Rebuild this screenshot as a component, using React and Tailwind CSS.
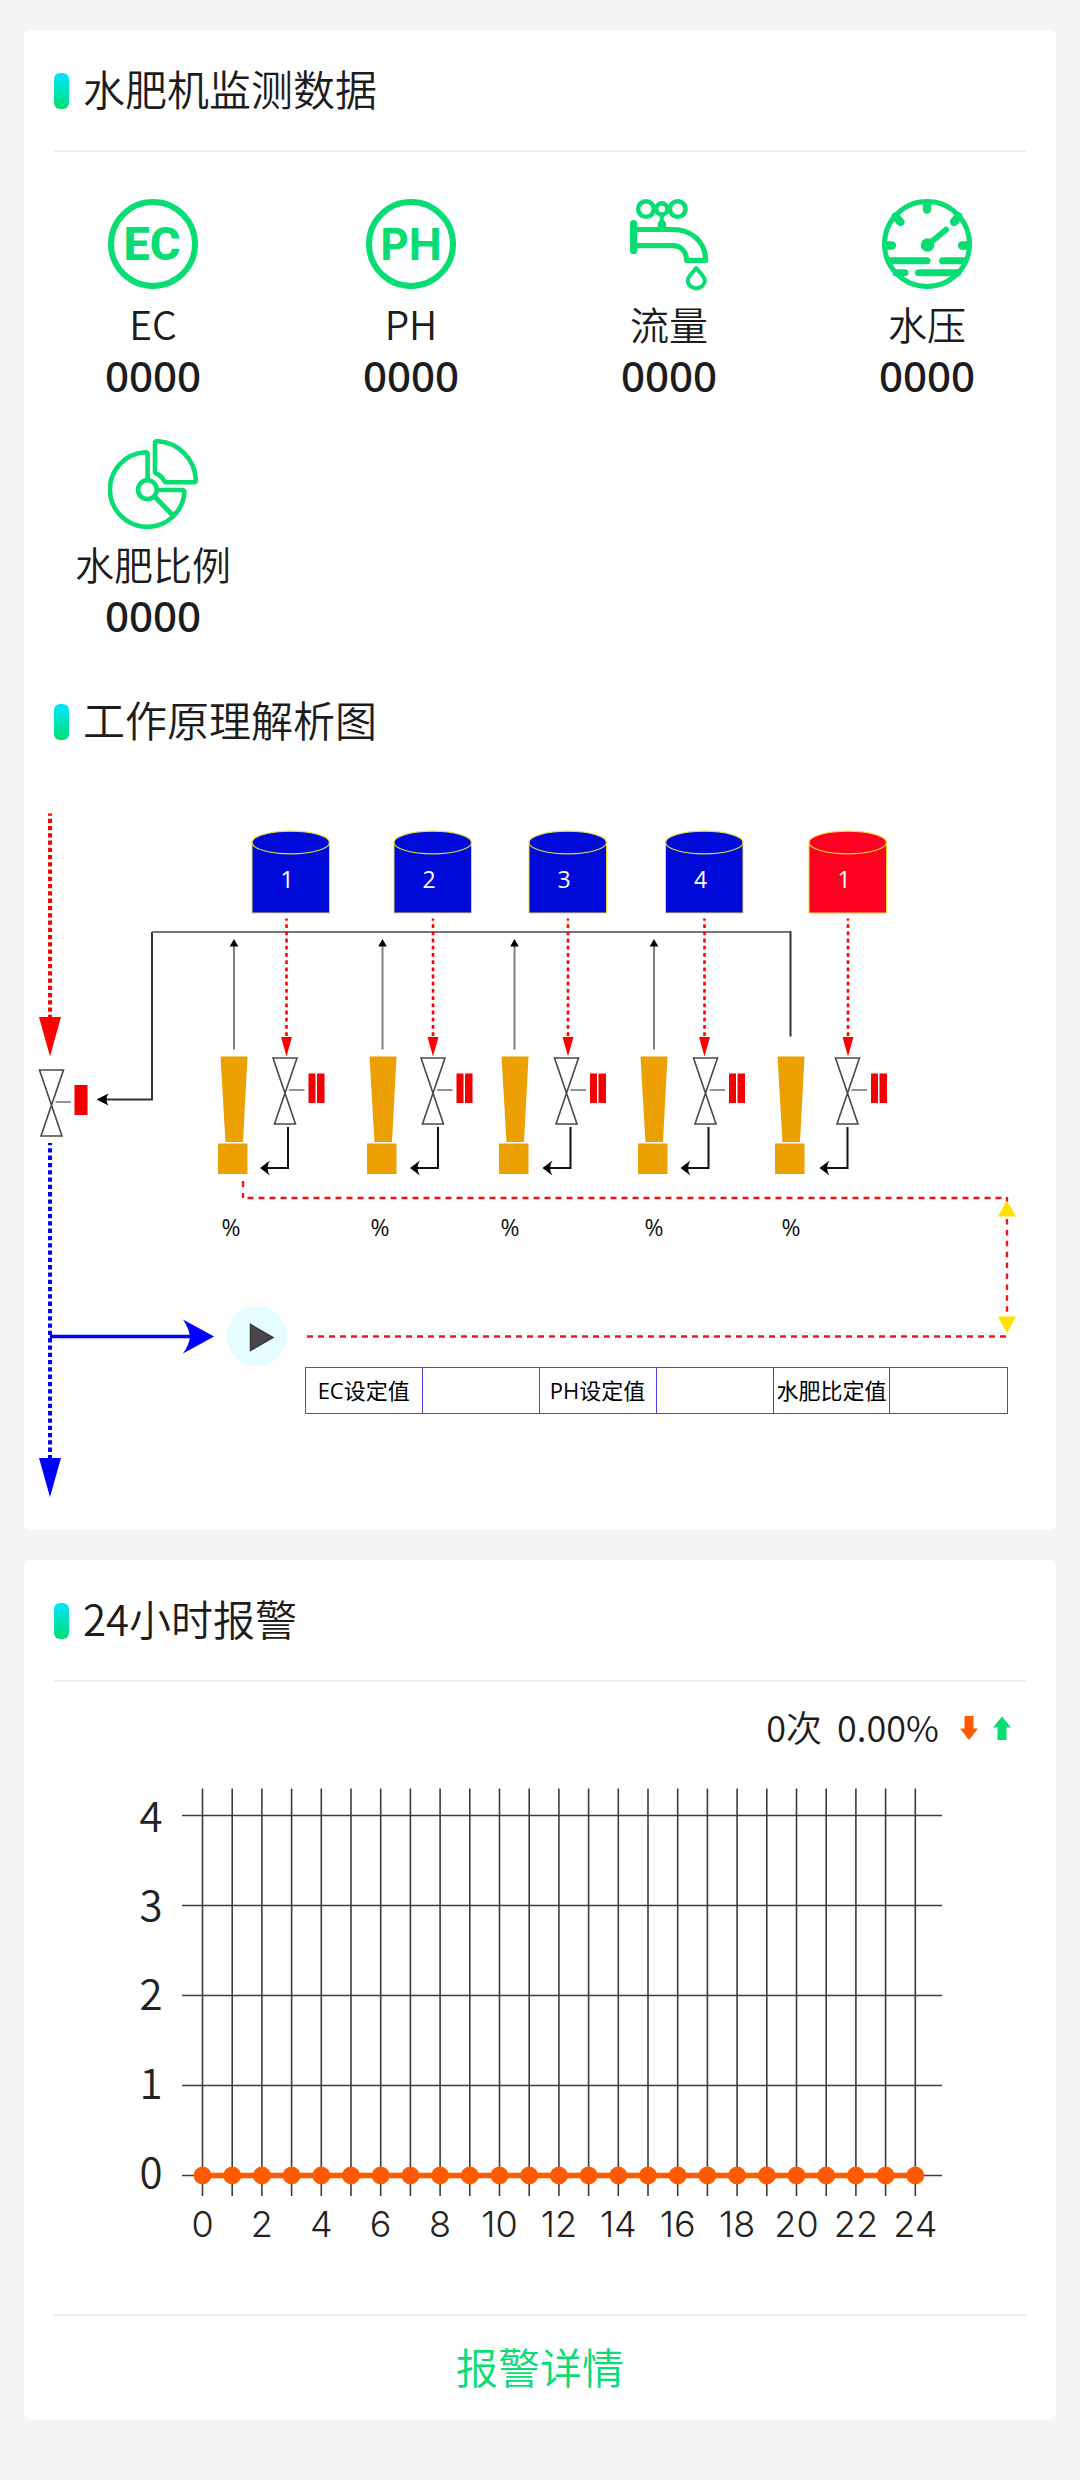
const GREEN = "#07dd73";
const ORANGE = "#ff5a00";
const AMBER = "#eb9f00";

function EcIcon() {
  return (
    <svg viewBox="0 0 90 90" className="size-[90px]" aria-hidden="true">
      <circle cx="45" cy="45" r="42" fill="none" stroke={GREEN} strokeWidth="6" />
      <text x="44" y="61" textAnchor="middle" fill={GREEN} className="font-[Roboto,sans-serif] text-[47px] font-extrabold">EC</text>
    </svg>
  );
}

function PhIcon() {
  return (
    <svg viewBox="0 0 90 90" className="size-[90px]" aria-hidden="true">
      <circle cx="45" cy="45" r="42" fill="none" stroke={GREEN} strokeWidth="6" />
      <text x="45" y="61" textAnchor="middle" fill={GREEN} className="font-[Inter,sans-serif] text-[44px] font-bold">PH</text>
    </svg>
  );
}

function TapIcon() {
  return (
    <svg viewBox="0 0 90 90" className="size-[90px] overflow-visible" fill="none" stroke={GREEN} aria-hidden="true">
      <circle cx="22" cy="10" r="7.8" strokeWidth="4.6" />
      <circle cx="53.7" cy="10" r="7.8" strokeWidth="4.6" />
      <circle cx="37.8" cy="10" r="5.6" strokeWidth="4.6" />
      <path d="M35.8 16h4v5l2.4 3v5h-8.4v-5l2-3z" fill={GREEN} stroke="none" />
      <rect x="6" y="21" width="7.2" height="34" rx="3.6" fill={GREEN} stroke="none" />
      <path d="M12 30.5H48.5C68 30.5 81.6 43.5 81.6 61.3H62.6C62.6 52.5 57 46.7 48.5 46.7H12" strokeWidth="5.2" strokeLinejoin="round" />
      <path d="M72.3 69C69.5 73 63.8 77.5 63.8 81.500a8.500 7.800 0 0 0 17 0C80.800 77.500 75 73 72.300 69z" strokeWidth="4" strokeLinejoin="round" />
    </svg>
  );
}

function GaugeIcon() {
  return (
    <svg viewBox="0 0 90 90" className="size-[90px]" fill="none" stroke={GREEN} strokeLinecap="round" aria-hidden="true">
      <circle cx="45" cy="45" r="42.500" strokeWidth="5" />
      <path d="M45 5V10.500M5 46.500H10M80 46.500H85M13.500 17.500L18.500 23M76.500 17.500L72 23" strokeWidth="8.400" />
      <path d="M45.500 46L64 30.800" strokeWidth="6" />
      <circle cx="45.500" cy="46" r="6.800" fill={GREEN} stroke="none" />
      <path d="M7 61.700H45M60.500 61.700H83M14 73.700H23M36.500 73.700H76" strokeWidth="7" />
    </svg>
  );
}

function RatioIcon() {
  return (
    <svg viewBox="0 0 90 90" className="size-[90px]" fill="none" stroke={GREEN} strokeWidth="4.600" strokeLinejoin="round" aria-hidden="true">
      <path d="M39.600 41V15.500Q39.600 13.200 37 13.300A37.300 37.300 0 1 0 76.400 53.500Q76.400 51 74 51H49" />
      <circle cx="39.400" cy="50.700" r="9.400" />
      <path d="M47.500 58.500L64.500 76" strokeWidth="5" />
      <path d="M64.500 76Q66 73.500 69 72.500" strokeWidth="3" />
      <path d="M49.500 2.200A40.500 40.500 0 0 1 87.800 41Q88 43.300 86 43.300H57.500Q55.500 41.500 54.500 39Q52 36.500 47 33.500V4Q47 2.200 49.500 2.200Z" />
    </svg>
  );
}

const METRICS = [
  { label: "EC", value: "0000", Icon: EcIcon },
  { label: "PH", value: "0000", Icon: PhIcon },
  { label: "流量", value: "0000", Icon: TapIcon },
  { label: "水压", value: "0000", Icon: GaugeIcon },
  { label: "水肥比例", value: "0000", Icon: RatioIcon },
];

function SectionTitle({ children }) {
  return (
    <header className="flex h-[120px] items-center gap-[14px] px-[30px]">
      <span className="mt-0.5 h-9 w-[15px] rounded-md bg-linear-to-b from-[#00e5ff] to-[#00de6e]" />
      <h2 className="pb-1 text-[42px] leading-[60px] font-[350]">{children}</h2>
    </header>
  );
}

function Divider() {
  return <hr className="mx-[30px] h-0.5 border-0 bg-[#ececec]" />;
}

// One lane per tank: tank left edge, drop line, valve centre, return pipe, pump left edge, riser, ratio label.
const LANES = [
  { name: "1", color: "#000bd9", tank: 252, drop: 286.5, valve: 285, back: 288, pump: 218, riser: 234, ratio: 231 },
  { name: "2", color: "#000bd9", tank: 394, drop: 433, valve: 433, back: 438, pump: 367, riser: 382.5, ratio: 380 },
  { name: "3", color: "#000bd9", tank: 529, drop: 568, valve: 566.5, back: 570.5, pump: 499, riser: 514.5, ratio: 510 },
  { name: "4", color: "#000bd9", tank: 665.5, drop: 704.5, valve: 705.5, back: 708.5, pump: 638, riser: 654, ratio: 654 },
  { name: "1", color: "#ff0020", tank: 809, drop: 848, valve: 847.5, back: 847.5, pump: 775, riser: null, ratio: 791 },
];

function Valve({ x, y }) {
  return (
    <g fill="none" stroke="#4a4a4a" strokeWidth="1.6">
      <path d={`M${x - 12} ${y - 32}h24L${x - 10.5} ${y + 34}h21z`} />
      <path d={`M${x + 4} ${y}h15.500`} stroke="#777" />
    </g>
  );
}

function Lane({ lane }) {
  const { name, color, tank, drop, valve, back, pump, riser, ratio } = lane;
  return (
    <g>
      <rect x={tank} y="844" width="77.500" height="69" fill={color} stroke="#e6df3a" strokeWidth="1" />
      <ellipse cx={tank + 38.75} cy="842.500" rx="38.750" ry="11.300" fill={color} stroke="#e6df3a" strokeWidth="1.200" />
      <text x={tank + 35} y="888" textAnchor="middle" fill="#fff" className="text-[23px]">{name}</text>
      <path d={`M${drop} 918.500V1037`} stroke="#f00" strokeWidth="2.600" strokeDasharray="3.800 3.400" strokeDashoffset="1.500" />
      <path d={`M${drop - 5.5} 1037h11l-5.500 19.500z`} fill="#f00" />
      {riser && <path d={`M${riser} 1049.500V945`} stroke="#808080" strokeWidth="2" />}
      {riser && <path d={`M${riser - 4.3} 946.500h8.600L${riser} 939z`} fill="#000" />}
      <path d={`M${pump + 2.5} 1056.500h27l-4.500 85.500h-17.500z`} fill={AMBER} />
      <rect x={pump} y="1143.500" width="29.500" height="30.500" fill={AMBER} />
      <Valve x={valve} y={1090} />
      <rect x={valve + 23.5} y="1073.500" width="7" height="29.500" fill="#f20000" />
      <rect x={valve + 32} y="1073.500" width="7.500" height="29.500" fill="#f20000" />
      <path d={`M${back} 1127V1168H${back - 22}`} fill="none" stroke="#111" strokeWidth="2" />
      <path d={`M${back - 28} 1168l10-7.500q-5 7.500 0 15z`} fill="#000" />
      <text x={ratio} y="1236" textAnchor="middle" fill="#111" className="text-[23px]">%</text>
    </g>
  );
}

function Schematic() {
  return (
    <svg viewBox="24 781 1032 749" className="block w-full font-['Open_Sans','Noto_Sans_CJK_SC',sans-serif]" role="img" aria-label="工作原理解析图">
      <path d="M50 813.500V1017" stroke="#f00" strokeWidth="4" strokeDasharray="4.260 3" strokeDashoffset="2" />
      <path d="M39 1017h22l-11 39.500z" fill="#f00" />
      <Valve x={51.5} y={1102} />
      <rect x="74.500" y="1085" width="13" height="30" fill="#f20000" />
      <path d="M50 1143V1458" stroke="#00f" strokeWidth="4" strokeDasharray="4.300 3" strokeDashoffset="2" />
      <path d="M39 1458h22l-11 39z" fill="#00f" />

      <path d="M152 932V1099.500H104" fill="none" stroke="#333" strokeWidth="2" />
      <path d="M152 932H790.500" stroke="#777" strokeWidth="2" />
      <path d="M790.500 931V1036.500" stroke="#333" strokeWidth="2" />
      <path d="M96.500 1099.500l12-6q-4 6 0 12z" fill="#000" />

      {LANES.map((lane) => (
        <Lane key={lane.tank} lane={lane} />
      ))}

      <g fill="none" stroke="#ee1616" strokeWidth="2.400">
        <path d="M243 1181V1198" strokeDasharray="6 6" />
        <path d="M247.500 1198H1007" strokeDasharray="6 5" />
        <path d="M1007 1197V1202" />
        <path d="M1007 1219V1316" strokeDasharray="5.500 5.400" />
        <path d="M307 1336.500H1007" strokeDasharray="6 5" />
      </g>
      <path d="M998 1216.500h18l-9-16zM998 1316.500h18l-9 17z" fill="#ffe000" />

      <path d="M50 1336.500H192" stroke="#00f" strokeWidth="3.600" />
      <path d="M214 1336.500l-31-17q6 9 7 17q-1 9-7 17z" fill="#00f" />
    </svg>
  );
}

function SetpointTable() {
  return (
    <table className="h-[47px] w-full table-fixed border-collapse text-center font-['Open_Sans','Noto_Sans_CJK_SC',sans-serif] text-[22px] leading-[30px] text-black">
      <tbody>
        <tr>
          {["EC设定值", "", "PH设定值", "", "水肥比定值", ""].map((text, i) => (
            <td key={i} className="border border-[#4f44e4] p-0 whitespace-nowrap">{text}</td>
          ))}
        </tr>
      </tbody>
    </table>
  );
}

const HOURS = Array.from({ length: 25 }, (_, i) => i);
const ALARMS = HOURS.map(() => 0);
const hourX = (h) => 202.5 + h * 29.7;
const countY = (n) => 2175.5 - n * 90;

function AlarmChart() {
  return (
    <svg viewBox="24 1755 1032 559" className="block w-full" role="img" aria-label="24小时报警">
      <g stroke="#3c3c3c" strokeWidth="1.600">
        {HOURS.map((h) => (
          <path key={h} d={`M${hourX(h)} 1788.500V2196`} />
        ))}
        {[0, 1, 2, 3, 4].map((n) => (
          <path key={n} d={`M182 ${countY(n)}H942`} />
        ))}
      </g>
      <g fill="#222" textAnchor="middle">
        {[0, 1, 2, 3, 4].map((n) => (
          <text key={n} x="151" y={2188 - n * 89} className="text-[42px] font-[350]">{n}</text>
        ))}
        {HOURS.filter((h) => h % 2 === 0).map((h) => (
          <text key={h} x={hourX(h)} y="2237" className="font-[Inter,sans-serif] text-[36px] font-[350]">{h}</text>
        ))}
      </g>
      <polyline points={ALARMS.map((v, h) => `${hourX(h)},${countY(v)}`).join(" ")} fill="none" stroke={ORANGE} strokeWidth="5.500" />
      {ALARMS.map((v, h) => (
        <circle key={h} cx={hourX(h)} cy={countY(v)} r="9" fill={ORANGE} />
      ))}
    </svg>
  );
}

export default function App() {
  return (
    <main className="flex min-h-screen flex-col gap-[30px] bg-[#f4f4f4] px-6 py-[30px] font-['Noto_Sans_CJK_SC',sans-serif] text-[#1c1c1c]">
      <section className="rounded-md bg-white">
        <SectionTitle>水肥机监测数据</SectionTitle>
        <Divider />
        <ul className="grid grid-cols-4 gap-y-9 pt-[47px]">
          {METRICS.map(({ label, value, Icon }) => (
            <li key={label} className="flex flex-col items-center">
              <Icon />
              <span className="mt-2 text-[39px] leading-[52px] font-[350]">{label}</span>
              <span className="font-['Noto_Sans',sans-serif] text-[42px] leading-[54px] font-medium">{value}</span>
            </li>
          ))}
        </ul>
        <div className="mt-[18px]">
          <SectionTitle>工作原理解析图</SectionTitle>
        </div>
        <div className="relative">
          <Schematic />
          <button type="button" aria-label="播放" className="absolute top-[70.1%] left-[19.7%] flex size-[60px] items-center justify-center rounded-full bg-[#e6fdff]">
            <svg viewBox="0 0 60 60" className="size-full" aria-hidden="true">
              <path d="M23.500 18.500L46 31.500L23.500 44.500z" fill="#484848" stroke="#3a3a3a" strokeWidth="1.500" />
            </svg>
          </button>
          <div className="absolute top-[78.2%] right-[4.7%] left-[27.2%]">
            <SetpointTable />
          </div>
        </div>
      </section>

      <section className="rounded-md bg-white">
        <SectionTitle>24小时报警</SectionTitle>
        <Divider />
        <div className="flex h-[73px] items-center justify-end gap-[15px] pt-[19px] pr-[45px] text-[36px] leading-[50px] font-[350]">
          <span className="pb-1">0次</span>
          <span className="mr-1.5 pb-1">0.00%</span>
          <svg viewBox="0 0 18 24" className="h-6 w-[18px]" aria-label="下降">
            <path d="M4.500 0h9v12.500H18L9 24L0 12.500h4.500z" fill={ORANGE} />
          </svg>
          <svg viewBox="0 0 18 24" className="h-6 w-[18px]" aria-label="上升">
            <path d="M4.500 24h9V11.500H18L9 0.500L0 11.500h4.500z" fill={GREEN} />
          </svg>
        </div>
        <AlarmChart />
        <Divider />
        <a href="#alarms" className="flex h-[104px] items-center justify-center pb-1 text-[42px] leading-[60px] font-[350] text-[#07dd73]">
          报警详情
        </a>
      </section>
    </main>
  );
}
